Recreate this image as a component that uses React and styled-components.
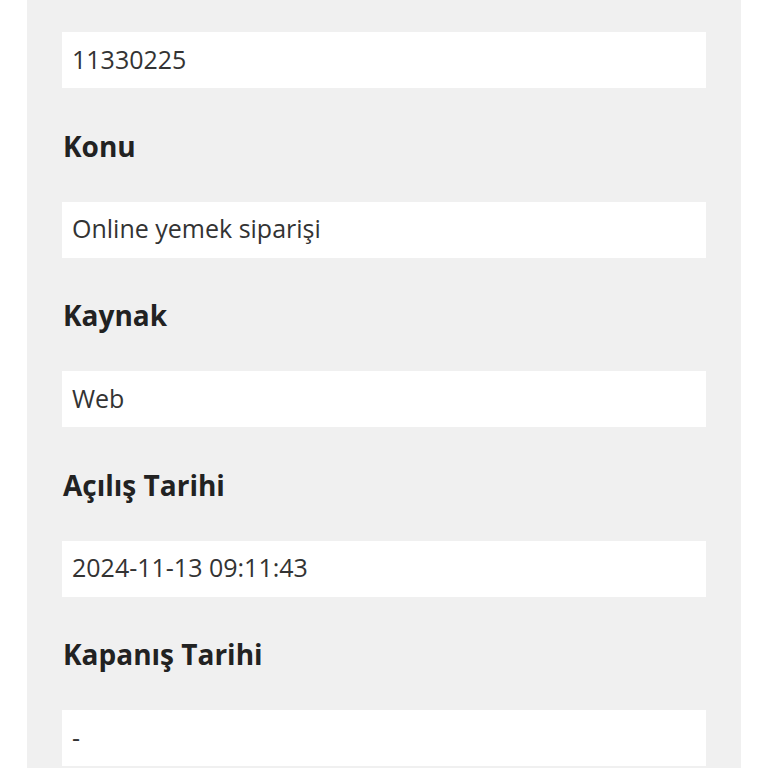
import styled, { createGlobalStyle } from "styled-components"

const GlobalStyle = createGlobalStyle`
    html, body{
        margin:0;
        padding:0;
        background:#fff;
        font-family:"Open Sans", "Noto Sans", sans-serif;
    }
`

const Panel = styled.section`
    margin:0 27px;
    background-color:#f0f0f0;
    padding:32px 35px 40px 35px;
    min-height:768px;
    box-sizing:border-box;
`

const Label = styled.h3`
    margin:37.5px 0 36px 1px;
    font-size:28px;
    line-height:40px;
    font-weight:700;
    color:#222;
`

const Value = styled.div`
    height:56px;
    box-sizing:border-box;
    background-color:#fff;
    padding:0 10px 3px 10px;
    display:flex;
    align-items:center;
    font-size:25px;
    color:#333;
    white-space:nowrap;
`

const fields = [
    { label: null, value: "11330225" },
    { label: "Konu", value: "Online yemek siparişi" },
    { label: "Kaynak", value: "Web" },
    { label: "Açılış Tarihi", value: "2024-11-13 09:11:43" },
    { label: "Kapanış Tarihi", value: "-" },
]

function App(){
    return (
        <>
            <GlobalStyle/>
            <Panel>
                {fields.map((f, i) => (
                    <div key={i}>
                        {f.label && <Label>{f.label}</Label>}
                        <Value>{f.value}</Value>
                    </div>
                ))}
            </Panel>
        </>
    )
}

export default App
